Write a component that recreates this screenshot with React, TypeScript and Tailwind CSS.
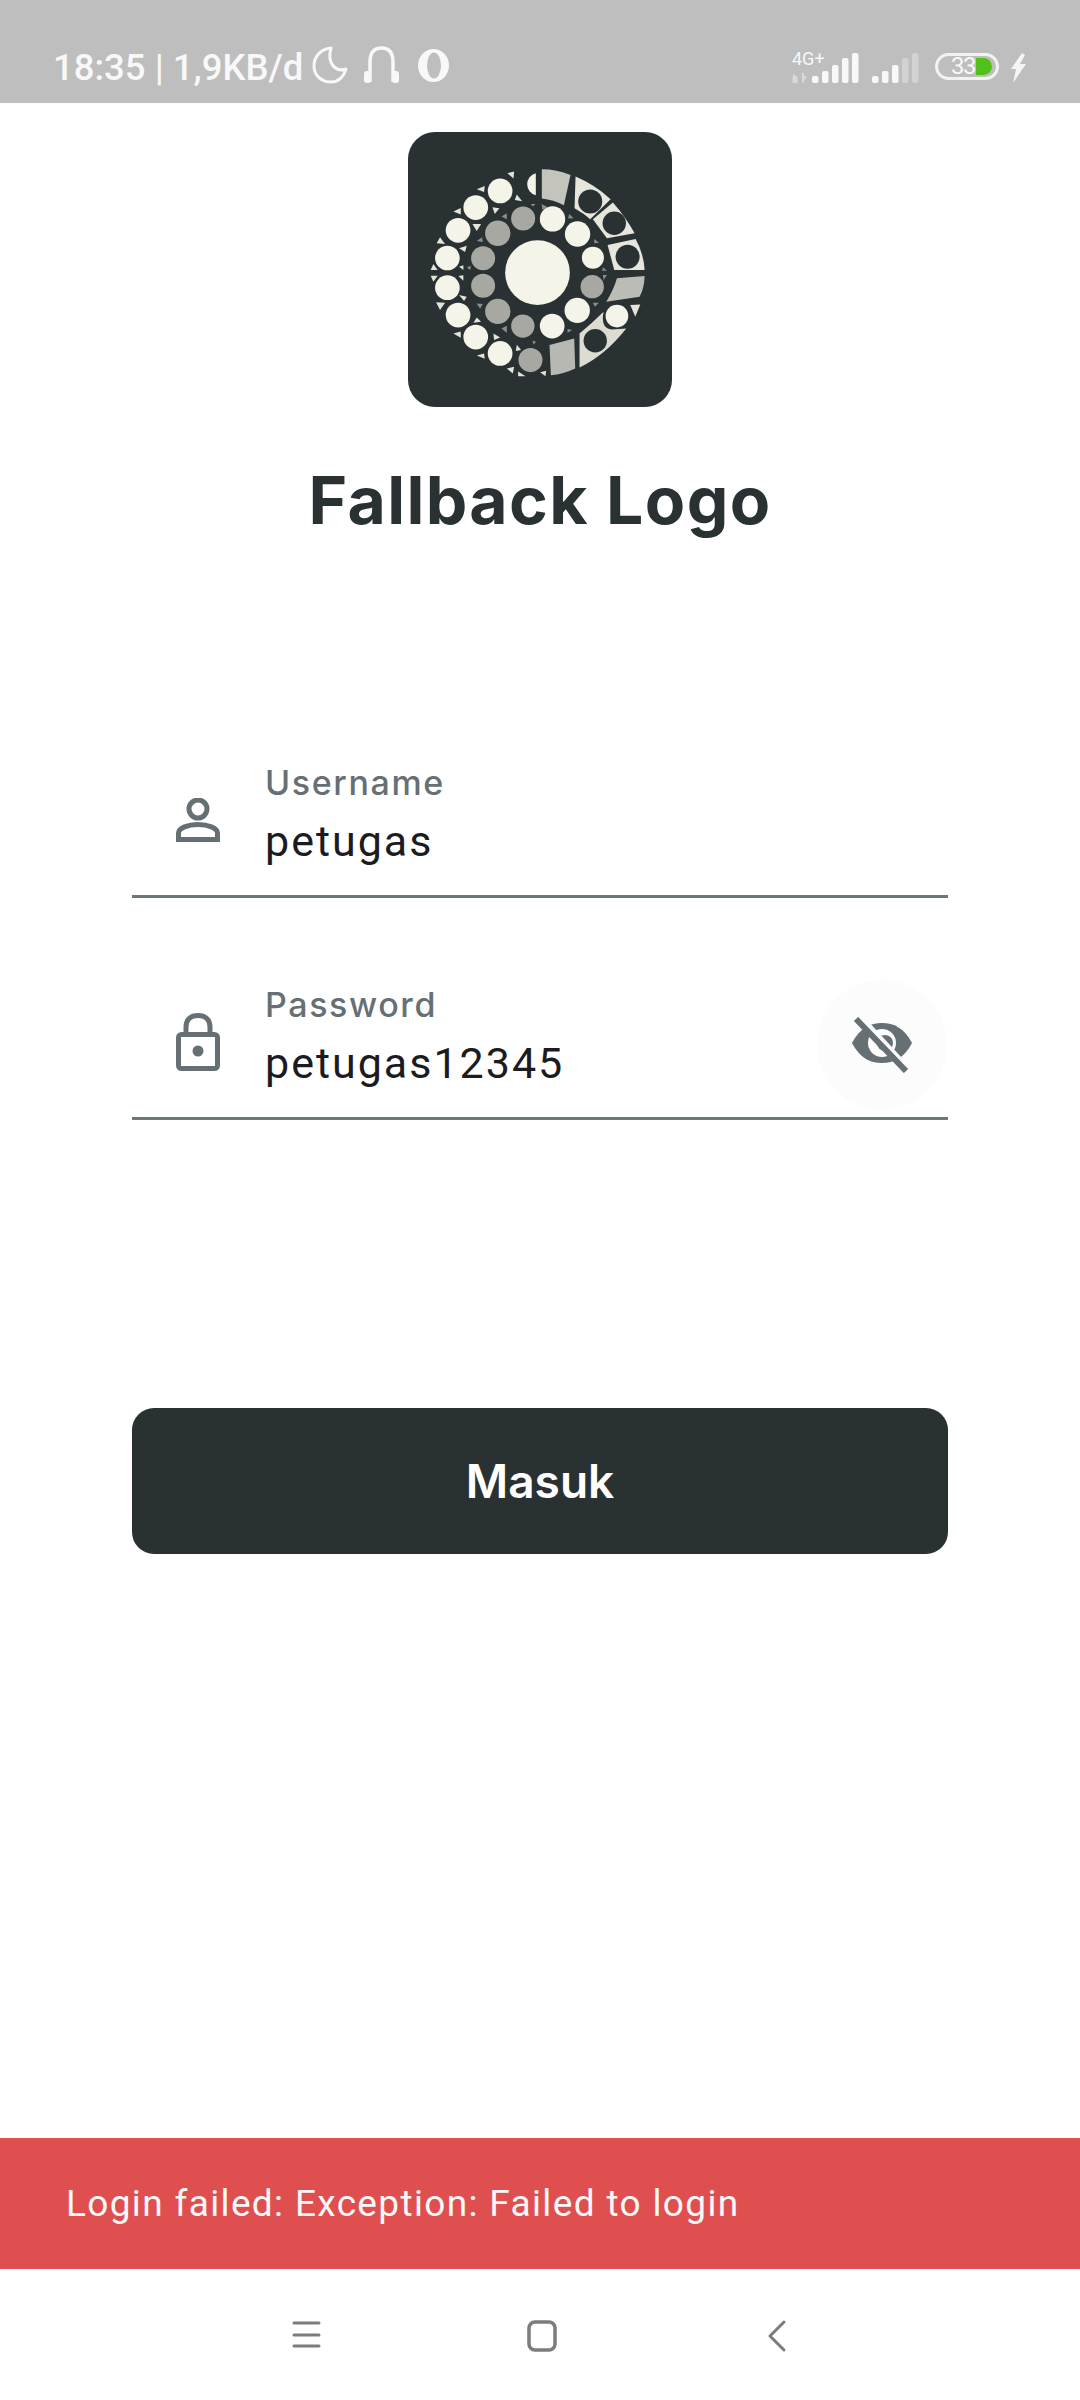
const LIGHT = "#f4f4e9";
const GREY = "#a8a8a2";
const DARK = "#2a3133";

const lightCircles = [
  [442, 458, 97], [487, 297, 38], [562, 342, 38], [608, 413, 33], [561, 571, 38], [486, 618, 37],
  [172, 414, 37], [172, 503, 37], [204, 331, 37], [204, 585, 37], [257, 263, 37], [257, 651, 37],
  [330, 213, 37], [330, 700, 37], [680, 588, 34],
];
const greyCircles = [
  [606, 500, 35], [398, 618, 35], [323, 574, 38], [279, 497, 36], [279, 415, 36], [323, 340, 38], [399, 296, 36], [421, 720, 36],
];
const tris = [
  "352,160 372,155 370,176", "260,208 284,198 282,216", "190,275 212,264 212,284", "140,370 150,352 165,372",
  "122,450 130,432 143,450", "122,467 143,467 130,485", "138,547 165,548 150,570", "190,640 212,634 212,653",
  "260,706 282,700 284,716", "350,745 372,740 368,760", "384,754 406,768 384,768", "450,756 468,752 466,768",
  "374,240 396,244 380,224", "307,262 328,265 314,282", "247,312 273,312 260,333", "207,385 230,377 225,396",
  "207,440 220,436 220,450", "205,468 220,466 220,482", "207,525 230,530 222,543", "250,608 273,605 260,592",
  "310,640 330,652 312,660", "377,693 393,690 380,674", "720,555 750,553 735,590",
];
const dimTris = [
  "334,290 350,280 350,298", "260,363 276,352 278,366", "230,442 243,438 240,450", "260,550 278,552 270,566",
  "334,625 350,617 350,638", "422,252 436,252 428,260", "454,252 473,262 457,270", "537,282 550,295 534,296",
  "612,357 626,368 612,370", "638,442 650,452 636,452", "638,465 650,465 640,480", "608,548 626,548 614,560",
  "532,627 546,630 532,638", "427,662 438,665 430,673",
];

function Logo() {
  return (
    <div className="w-[264px] h-[275px] rounded-[27px] bg-[#2a3133] overflow-hidden">
      <svg viewBox="54 37 791 823" width="264" height="275">
        {lightCircles.map(([x, y, r], i) => <circle key={i} cx={x} cy={y} r={r} fill={LIGHT} />)}
        {greyCircles.map(([x, y, r], i) => <circle key={i} cx={x} cy={y} r={r} fill={GREY} />)}
        {tris.map((p, i) => <polygon key={i} points={p} fill="#e4e4da" />)}
        {dimTris.map((p, i) => <polygon key={i} points={p} fill="#8b8f8b" />)}
        <path d="M437 160A34 34 0 0 0 437 226Z" fill={LIGHT} />
        <path d="M455 148Q500 148 541 165L521 256Q490 240 455 236Z" fill="#c4c4bd" />
        <path d="M556 170Q615 195 661 238L600 298Q580 280 553 265Z" fill="#e6e6dd" />
        <circle cx="600" cy="245" r="36" fill={DARK} />
        <path d="M668 248Q705 290 733 340L650 355L608 298Z" fill="#e6e6dd" />
        <circle cx="672" cy="310" r="35" fill={DARK} />
        <path d="M736 357Q760 400 763 450L672 450L652 375Z" fill="#e6e6dd" />
        <circle cx="712" cy="410" r="36" fill={DARK} />
        <path d="M680 475L763 468Q762 505 748 530L648 545Q670 510 680 475Z" fill="#bcbcb6" />
        <path d="M568 640Q605 610 640 575Q630 625 665 628L708 625Q645 705 568 742Z" fill="#dcdcd3" />
        <circle cx="615" cy="662" r="35" fill={DARK} />
        <path d="M478 675L552 655L555 745Q520 762 482 765Z" fill="#b8b8b2" />
      </svg>
    </div>
  );
}

function UserIcon() {
  return (
    <svg width="44" height="44" viewBox="0 0 44 44" fill="none">
      <circle cx="22" cy="11" r="9" stroke="#667074" strokeWidth="5" />
      <path d="M2.500 41.500V35C2.500 30 12 26.500 22 26.500S41.500 30 41.500 35V41.500Z" stroke="#667074" strokeWidth="5" />
    </svg>
  );
}

function LockIcon() {
  return (
    <svg width="44" height="58" viewBox="0 0 44 58" fill="none">
      <path d="M10 21V14C10 6 15 2.500 22 2.500S34 6 34 14V21" stroke="#667074" strokeWidth="5" />
      <rect x="2.500" y="21.500" width="39" height="34" rx="3" stroke="#667074" strokeWidth="5" />
      <circle cx="22" cy="38" r="5.500" fill="#667074" />
    </svg>
  );
}

function EyeOff() {
  return (
    <svg width="64" height="56" viewBox="0 0 64 56">
      <path d="M2 26C10 11 20 6 32 6S54 11 62 26C54 41 44 46 32 46S10 41 2 26Z" fill="#667074" />
      <circle cx="32" cy="26" r="14" fill="#fcfcfc" />
      <circle cx="35" cy="26" r="8" fill="#667074" />
      <path d="M10 2L56 52" stroke="#fcfcfc" strokeWidth="9" />
      <path d="M6 2L56 54" stroke="#667074" strokeWidth="6" />
    </svg>
  );
}

function Moon() {
  return (
    <svg width="36" height="38" viewBox="0 0 36 38" fill="none">
      <path d="M19 2C9 3 2 10 2 20C2 29 9 36 19 36C27 36 32 30 34 23C26 26 14 20 19 2Z" stroke="#f8f8f8" strokeWidth="3" strokeLinejoin="round" />
    </svg>
  );
}

function Headphones() {
  return (
    <svg width="37" height="38" viewBox="0 0 37 38" fill="none">
      <path d="M7 36V16C7 7 11 2 18.500 2S30 7 30 16V36" stroke="#f8f8f8" strokeWidth="3.500" />
      <rect x="1" y="25" width="7" height="12" rx="3" fill="#f8f8f8" />
      <rect x="29" y="25" width="7" height="12" rx="3" fill="#f8f8f8" />
    </svg>
  );
}

function Opera() {
  return (
    <svg width="31" height="33" viewBox="0 0 31 33">
      <ellipse cx="15.500" cy="16.500" rx="15.500" ry="16.500" fill="#f8f8f8" />
      <ellipse cx="16" cy="16.500" rx="7" ry="13" fill="#bebebe" />
    </svg>
  );
}

function Signal({ faded }: { faded: number }) {
  const bars = [[0, 7], [10, 12], [20, 18], [30, 25], [40, 30]];
  return (
    <svg width="47" height="30" viewBox="0 0 47 30">
      {bars.map(([x, h], i) => (
        <rect key={i} x={x} y={30 - h} width="6.500" height={h} rx="2" fill="#f8f8f8" opacity={i >= 5 - faded ? 0.35 : 1} />
      ))}
    </svg>
  );
}

function StatusBar() {
  return (
    <div className="h-[103px] bg-[#bebebe] flex items-center pl-[53px] pr-[53px] pt-[32px] text-[#f8f8f8] font-['Roboto',sans-serif]">
      <span className="text-[36.5px] leading-[44px] font-medium whitespace-nowrap">18:35 | 1,9KB/d</span>
      <div className="ml-[9px] mt-[-5px] flex items-center"><Moon /></div>
      <div className="ml-[15px] mt-[-5px] flex items-center"><Headphones /></div>
      <div className="ml-[18px] mt-[-5px] flex items-center"><Opera /></div>
      <div className="ml-auto flex items-end">
        <div className="relative w-[20px] h-[30px]">
          <span className="absolute -top-[4px] left-0 text-[18px] leading-[20px] whitespace-nowrap">4G+</span>
          <svg className="absolute bottom-0 left-0" width="16" height="10" viewBox="0 0 16 10">
            <path d="M4 0V3H6.500V10H1.500V3Z" transform="translate(-1 0)" fill="#f8f8f8" opacity=".45" />
            <path d="M10 0H12V3H15L11 10H10Z" fill="#f8f8f8" opacity=".45" />
          </svg>
        </div>
        <Signal faded={0} />
        <div className="ml-[13px]"><Signal faded={2} /></div>
        <div className="ml-[16px] w-[64px] h-[27px] mb-[3px] rounded-full border-[3px] border-[#f2f2f2] relative overflow-hidden">
          <span className="absolute left-[13px] top-0 text-[24px] leading-[21px] tracking-[-1.5px] whitespace-nowrap">33</span>
          <div className="absolute right-[4px] top-[2px] bottom-[2px] w-[16px] rounded-r-full bg-[#4fc11a]" />
        </div>
        <svg className="ml-[11px]" width="17" height="30" viewBox="0 0 17 30">
          <path d="M12 0L1 16H6L3 30L16 11H10L15 2Z" fill="#f8f8f8" opacity=".95" />
        </svg>
      </div>
    </div>
  );
}

function Field({ label, value, icon, trailing, className }: { label: string; value: string; icon: React.ReactNode; trailing?: React.ReactNode; className?: string }) {
  return (
    <div className={`relative h-[145px] border-b-[3px] border-[#6c7779] flex items-center pl-[44px] ${className ?? ""}`}>
      <div className="w-[44px] mb-[8px] flex justify-center">{icon}</div>
      <div className="ml-[45px] pb-[16px] flex flex-col">
        <span className="text-[34px] leading-[40px] tracking-[1.6px] font-medium text-[#667074] font-['Inter',sans-serif]">{label}</span>
        <span className="mt-[10px] text-[43px] leading-[56px] tracking-[2px] text-[#1c1b1f] font-['Roboto',sans-serif]">{value}</span>
      </div>
      {trailing}
    </div>
  );
}

export default function App() {
  return (
    <div className="w-[1080px] h-[2400px] bg-white flex flex-col overflow-hidden">
      <StatusBar />
      <div className="flex flex-col items-center pt-[29px]">
        <Logo />
        <h1 className="mt-[56px] text-[66px] leading-[74px] tracking-[1.4px] font-bold text-[#2a3133] font-['Inter',sans-serif] whitespace-nowrap">Fallback Logo</h1>
      </div>
      <div className="px-[132px] flex flex-col">
        <Field className="mt-[216px]" label="Username" value="petugas" icon={<UserIcon />} />
        <Field
          className="mt-[77px]"
          label="Password"
          value="petugas12345"
          icon={<LockIcon />}
          trailing={
            <div className="ml-auto mb-[2px] mr-[1px] w-[130px] h-[130px] rounded-full bg-[#fcfcfc] flex items-center justify-center">
              <EyeOff />
            </div>
          }
        />
        <button className="mt-[288px] h-[146px] rounded-[22px] bg-[#2a3133] text-white text-[46px] font-semibold font-['Inter',sans-serif]">Masuk</button>
      </div>
      <div className="flex-1" />
      <div className="h-[131px] bg-[#e04f4f] flex items-center pl-[66px] text-[37px] tracking-[1.35px] text-[#f8f8f8] font-['Roboto',sans-serif]">
        Login failed: Exception: Failed to login
      </div>
      <div className="h-[131px] bg-white flex items-start justify-center pt-[8px]">
        <svg width="560" height="100" viewBox="0 0 560 100" fill="none" stroke="#7c7c7c" strokeLinecap="round" strokeLinejoin="round">
          <path d="M34 46H59M34 58H59M34 69H59" strokeWidth="3" />
          <rect x="269" y="45" width="26" height="28" rx="6" strokeWidth="3.500" />
          <path d="M524 45L510 59L524 73" strokeWidth="3" />
        </svg>
      </div>
    </div>
  );
}
